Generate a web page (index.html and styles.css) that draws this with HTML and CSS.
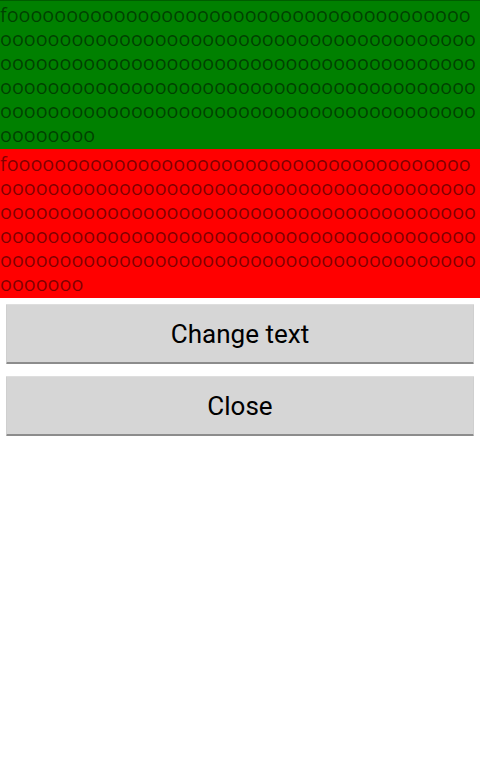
FILE: index.html
```html
<!DOCTYPE html>
<html>
<head>
<meta charset="utf-8">
<link rel="stylesheet" href="styles.css">
</head>
<body>
<div class="app">
  <div class="block green">f<!--
-->oooooooooo<!--
-->oooooooooo<!--
-->oooooooooo<!--
-->oooooooooo<!--
-->oooooooooo<!--
-->oooooooooo<!--
-->oooooooooo<!--
-->oooooooooo<!--
-->oooooooooo<!--
-->oooooooooo<!--
-->oooooooooo<!--
-->oooooooooo<!--
-->oooooooooo<!--
-->oooooooooo<!--
-->oooooooooo<!--
-->oooooooooo<!--
-->oooooooooo<!--
-->oooooooooo<!--
-->oooooooooo<!--
-->oooooooooo<!--
-->ooooooo</div>
  <div class="block red">f<!--
-->oooooooooo<!--
-->oooooooooo<!--
-->oooooooooo<!--
-->oooooooooo<!--
-->oooooooooo<!--
-->oooooooooo<!--
-->oooooooooo<!--
-->oooooooooo<!--
-->oooooooooo<!--
-->oooooooooo<!--
-->oooooooooo<!--
-->oooooooooo<!--
-->oooooooooo<!--
-->oooooooooo<!--
-->oooooooooo<!--
-->oooooooooo<!--
-->oooooooooo<!--
-->oooooooooo<!--
-->oooooooooo<!--
-->oooooooooo<!--
-->oooooo</div>
  <div class="buttons">
    <button class="btn">Change text</button>
    <button class="btn">Close</button>
  </div>
</div>
</body>
</html>
```
FILE: styles.css
```css
html, body {
  margin: 0;
  padding: 0;
  background: #ffffff;
}
.app {
  width: 480px;
  display: flex;
  flex-direction: column;
}
.block {
  font-family: "Open Sans", "DejaVu Sans", sans-serif;
  font-size: 19.8px;
  line-height: 24px;
  color: rgba(0, 0, 0, 0.5);
  word-break: break-all;
  height: 149px;
  box-sizing: border-box;
  padding-top: 3px;
}
.green {
  background: #008000;
  border-top: 1px solid #005c00;
  padding-top: 2px;
}
.red {
  background: #ff0000;
}
.buttons {
  display: flex;
  flex-direction: column;
  gap: 12px;
  padding: 6px 6px 0 6px;
}
.btn {
  height: 60px;
  box-sizing: border-box;
  margin: 0;
  padding: 0;
  background: #d6d6d6;
  border: none;
  border-top: 1px solid #dedede;
  border-left: 1px solid #cfcfcf;
  border-right: 1px solid #cfcfcf;
  border-bottom: 2px solid #8c8c8c;
  border-radius: 1px;
  font-family: Roboto, "Liberation Sans", sans-serif;
  font-size: 26px;
  color: #000000;
  text-align: center;
}
```
